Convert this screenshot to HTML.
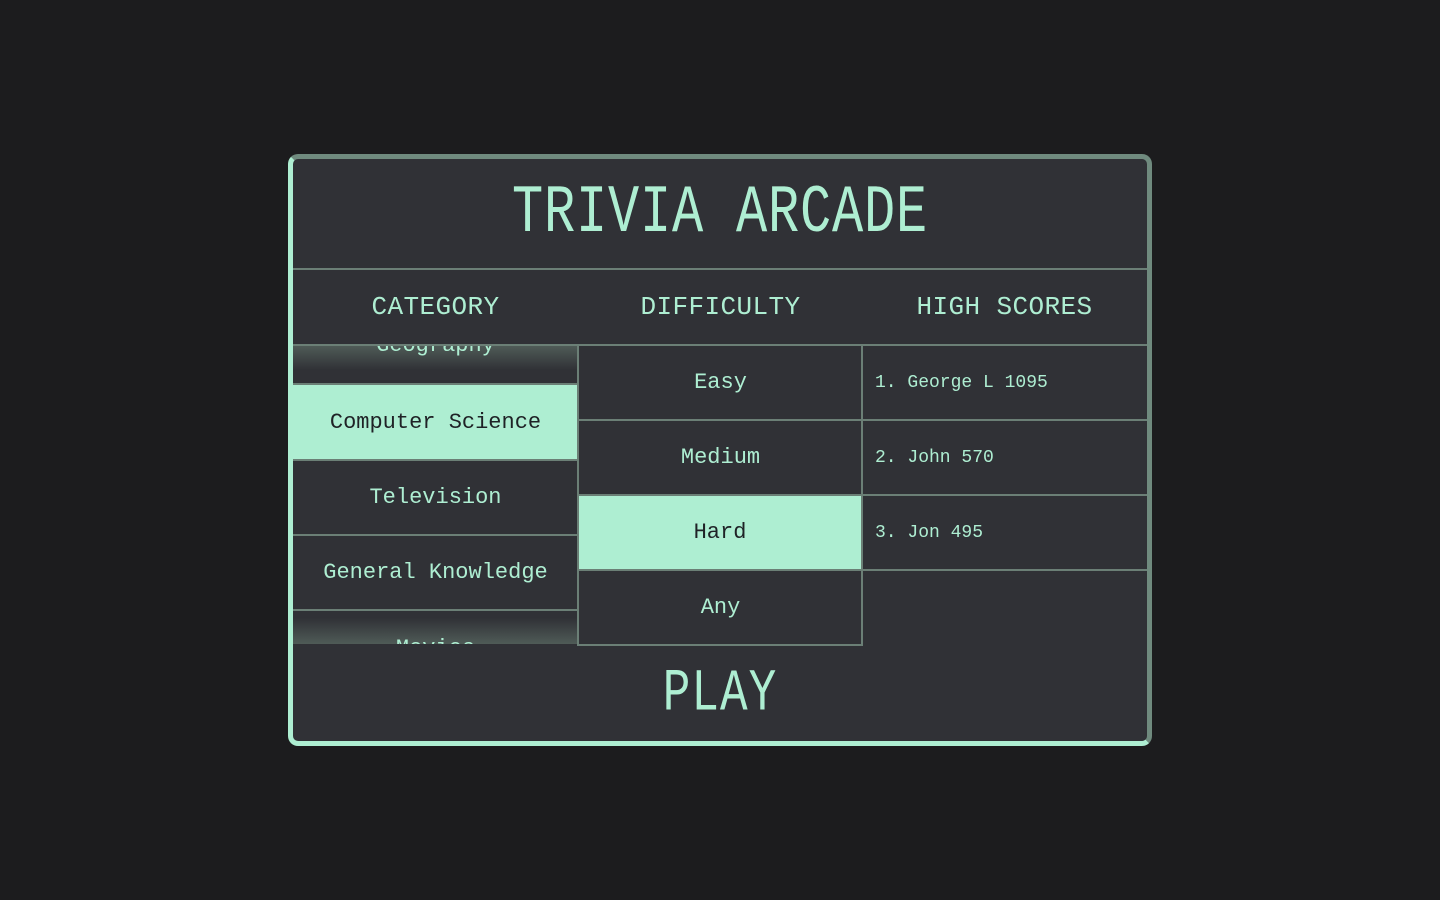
<!DOCTYPE html>
<html><head><meta charset="utf-8"><style>
*{margin:0;padding:0;box-sizing:border-box}
html,body{width:1440px;height:900px;background:#1c1c1e;overflow:hidden;font-family:"Liberation Mono",monospace;color:#aeeed2}
.frame{position:absolute;left:288px;top:154px;width:864px;height:592px;border-radius:10px;border:5px solid #aeeed2;border-top-color:#6f8a7e;border-right-color:#6f8a7e;background:#303136;overflow:hidden}
.a{position:absolute;display:flex;align-items:center;justify-content:center;white-space:nowrap}
.hl{position:absolute;height:2px;background:#6b7f76}
.vl{position:absolute;width:2px;background:#6b7f76}
.title{left:0;top:0;width:854px;height:109px;font-size:52px;letter-spacing:0.8px;}
.title span,.play span{display:inline-block;transform:scaleY(1.3)}
.hd{top:111px;height:74px;width:285px;font-size:26px;letter-spacing:0.4px}
.it{font-size:22px;width:285px;height:75px}
.sc{font-size:18px;justify-content:flex-start;padding-left:12px;width:284px;height:73px}
.sel{background:#aeeed2;color:#1f2226}
</style></head><body>
<div class="frame">
 <div class="a title"><span>TRIVIA ARCADE</span></div>
 <div class="hl" style="left:0;top:109px;width:854px"></div>
 <div class="a hd" style="left:0">CATEGORY</div>
 <div class="a hd" style="left:285px">DIFFICULTY</div>
 <div class="a hd" style="left:569px">HIGH SCORES</div>
 <div class="hl" style="left:0;top:185px;width:854px"></div>
 <!-- category list -->
 <div style="position:absolute;left:0;top:187px;width:285px;height:298px;overflow:hidden">
  <div style="position:absolute;left:0;top:0;width:285px;height:24px;background:linear-gradient(#4f5b57,rgba(48,49,54,0))"></div>
  <div style="position:absolute;left:0;top:272px;width:285px;height:26px;background:linear-gradient(rgba(48,49,54,0),#4f5b57)"></div>
  <div class="a it" style="top:-38px;left:0">Geography</div>
  <div class="hl" style="left:0;top:37px;width:285px"></div>
  <div class="a it sel" style="top:39px;left:0;height:74px">Computer Science</div>
  <div class="hl" style="left:0;top:113px;width:285px"></div>
  <div class="a it" style="top:114px;left:0;height:74px">Television</div>
  <div class="hl" style="left:0;top:188px;width:285px"></div>
  <div class="a it" style="top:189px;left:0;height:74px">General Knowledge</div>
  <div class="hl" style="left:0;top:263px;width:285px"></div>
  <div class="a it" style="top:265px;left:0">Movies</div>
 </div>
 <!-- difficulty -->
 <div class="vl" style="left:284px;top:185px;height:302px"></div>
 <div class="a it" style="left:286px;top:187px;width:283px;height:73px">Easy</div>
 <div class="hl" style="left:286px;top:260px;width:283px"></div>
 <div class="a it" style="left:286px;top:262px;width:283px;height:73px">Medium</div>
 <div class="hl" style="left:286px;top:335px;width:283px"></div>
 <div class="a it sel" style="left:286px;top:337px;width:282px;height:73px">Hard</div>
 <div class="hl" style="left:286px;top:410px;width:283px"></div>
 <div class="a it" style="left:286px;top:412px;width:283px;height:73px">Any</div>
 <div class="hl" style="left:284px;top:485px;width:286px"></div>
 <div class="vl" style="left:568px;top:185px;height:302px"></div>
 <!-- scores -->
 <div class="a sc" style="left:570px;top:187px">1. George L 1095</div>
 <div class="hl" style="left:570px;top:260px;width:284px"></div>
 <div class="a sc" style="left:570px;top:262px">2. John 570</div>
 <div class="hl" style="left:570px;top:335px;width:284px"></div>
 <div class="a sc" style="left:570px;top:337px">3. Jon 495</div>
 <div class="hl" style="left:570px;top:410px;width:284px"></div>
 <div class="a play" style="left:0;top:487px;width:854px;height:95px;font-size:46px;letter-spacing:1px"><span>PLAY</span></div>
</div>
</body></html>
